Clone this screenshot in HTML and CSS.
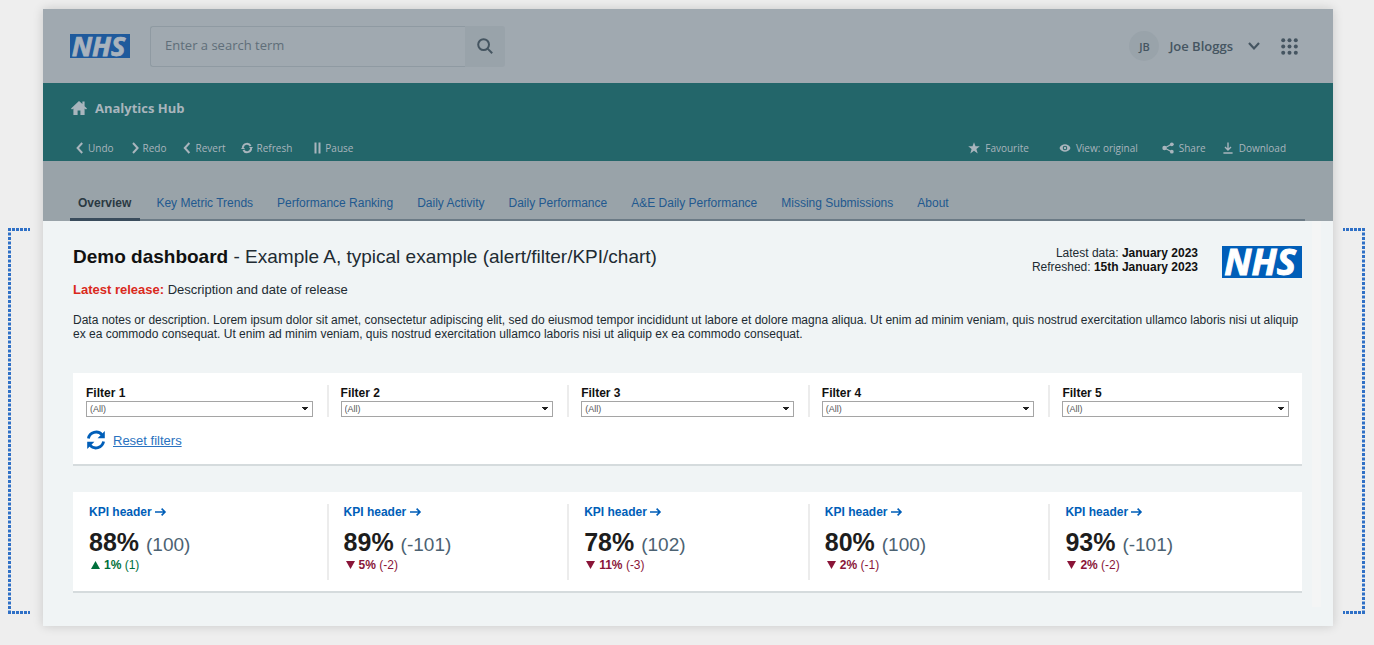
FILE: index.html
```html
<!DOCTYPE html>
<html lang="en">
<head>
<meta charset="utf-8">
<title>Analytics Hub - Demo dashboard</title>
<link rel="stylesheet" href="styles.css">
</head>
<body>
<div class="stage">
  <svg class="bracket" aria-hidden="true">
    <line x1="0" y1="1.5" x2="100%" y2="1.5" stroke-dasharray="3 1"/>
    <line x1="1.5" y1="0" x2="1.5" y2="100%" stroke-dasharray="3 1.5"/>
    <svg y="100%" overflow="visible"><line x1="0" y1="-1.5" x2="100%" y2="-1.5" stroke-dasharray="3 1"/></svg>
  </svg>

  <div class="window">
    <header class="topbar">
      <svg class="logo logo-small" viewBox="0 0 80 32" role="img" aria-label="NHS"><rect width="80" height="32"/><text x="38" y="29" text-anchor="middle">NHS</text></svg>
      <form class="search">
        <input class="search-input" type="search" placeholder="Enter a search term" aria-label="Enter a search term">
        <button class="search-button" type="button" aria-label="Search">
          <svg width="16" height="16" viewBox="0 0 16 16" fill="none" stroke="currentColor" stroke-width="2"><circle cx="6.6" cy="6.6" r="5.4"/><path d="M10.6 10.6L15.2 15.2"/></svg>
        </button>
      </form>
      <div class="user">
        <span class="avatar">JB</span>
        <button class="user-button" type="button">Joe Bloggs
          <svg width="12" height="8" viewBox="0 0 12 8" fill="none" stroke="currentColor" stroke-width="2.2"><path d="M1 1L6 6.4L11 1"/></svg>
        </button>
        <button class="apps" type="button" aria-label="Apps">
          <svg width="17" height="17" viewBox="0 0 17 17" fill="currentColor"><circle cx="2.2" cy="2.2" r="2"/><circle cx="8.5" cy="2.2" r="2"/><circle cx="14.8" cy="2.2" r="2"/><circle cx="2.2" cy="8.5" r="2"/><circle cx="8.5" cy="8.5" r="2"/><circle cx="14.8" cy="8.5" r="2"/><circle cx="2.2" cy="14.8" r="2"/><circle cx="8.5" cy="14.8" r="2"/><circle cx="14.8" cy="14.8" r="2"/></svg>
        </button>
      </div>
    </header>

    <section class="hub">
      <a class="hub-title" href="#">
        <svg width="16" height="14" viewBox="0 0 16 14" fill="currentColor"><path d="M8 0L0 7.4L1 8.6L2.4 7.6V14H6.6V9.4H9.4V14H13.6V7.6L15 8.6L16 7.4L13.6 5.2V.6H11.4V3.1Z"/></svg>
        Analytics Hub
      </a>
      <div class="toolbar">
        <div class="tools">
          <button type="button"><svg width="12" height="12" viewBox="0 0 12 12" class="line"><path d="M8.2 1L3.6 6L8.2 11"/></svg>Undo</button>
          <button type="button"><svg width="12" height="12" viewBox="0 0 12 12" class="line"><path d="M4 1L8.6 6L4 11"/></svg>Redo</button>
          <button type="button"><svg width="12" height="12" viewBox="0 0 12 12" class="line"><path d="M8.4 1L3.8 6L8.4 11"/></svg>Revert</button>
          <button type="button" class="refresh"><svg width="12" height="12" viewBox="0 0 12 12" class="line"><path d="M1.9 5.4A4.1 4.1 0 0 1 9.6 4M10.1 6.6A4.1 4.1 0 0 1 2.4 8"/><path class="solid" d="M8 5H12L10.2 7.6ZM0 7H4L1.8 4.4Z"/></svg>Refresh</button>
          <button type="button" class="apart"><svg width="12" height="12" viewBox="0 0 12 12" class="line"><path d="M4.5 .6V11.4M8.5 .6V11.4"/></svg>Pause</button>
        </div>
        <div class="tools tools-end">
          <button type="button" class="favourite"><svg width="12" height="12" viewBox="0 0 12 12"><path d="M6 .2L7.5 4.3H11.8L8.4 7L9.7 11.4L6 8.8L2.3 11.4L3.6 7L.2 4.3H4.5Z"/></svg>Favourite</button>
          <button type="button"><svg width="12" height="12" viewBox="0 0 12 12"><path fill-rule="evenodd" d="M.5 6C2.4 1 9.6 1 11.5 6C9.6 11 2.4 11 .5 6ZM6 3.7A2.3 2.3 0 1 0 6 8.3A2.3 2.3 0 1 0 6 3.7Z"/><circle cx="6" cy="6" r="1.2"/></svg>View: original</button>
          <button type="button"><svg width="12" height="12" viewBox="0 0 12 12"><path d="M9.6 2.2L2.6 6L9.6 9.8" fill="none" stroke="currentColor" stroke-width="1.2"/><circle cx="2.5" cy="6" r="2.2"/><circle cx="9.8" cy="2.3" r="1.9"/><circle cx="9.8" cy="9.7" r="1.9"/></svg>Share</button>
          <button type="button" class="download"><svg width="12" height="12" viewBox="0 0 12 12" class="line thin"><path d="M6 .6V8M3 5L6 8L9 5M1.4 11H10.6"/></svg>Download</button>
        </div>
      </div>
    </section>

    <nav class="tabs">
      <ul>
        <li><a class="active" href="#" aria-current="page">Overview</a></li>
        <li><a href="#">Key Metric Trends</a></li>
        <li><a href="#">Performance Ranking</a></li>
        <li><a href="#">Daily Activity</a></li>
        <li><a href="#">Daily Performance</a></li>
        <li><a href="#">A&amp;E Daily Performance</a></li>
        <li><a href="#">Missing Submissions</a></li>
        <li><a href="#">About</a></li>
      </ul>
    </nav>

    <div class="body">
      <main class="content">
        <div class="heading">
          <div class="heading-text">
            <h1><strong>Demo dashboard</strong> - Example A, typical example (alert/filter/KPI/chart)</h1>
            <p class="release"><strong>Latest release:</strong> Description and date of release</p>
          </div>
          <p class="dates">Latest data: <strong>January 2023</strong><br>Refreshed: <strong>15th January 2023</strong></p>
          <svg class="logo" viewBox="0 0 80 32" role="img" aria-label="NHS"><rect width="80" height="32"/><text x="38" y="29" text-anchor="middle">NHS</text></svg>
        </div>
        <p class="notes">Data notes or description. Lorem ipsum dolor sit amet, consectetur adipiscing elit, sed do eiusmod tempor incididunt ut labore et dolore magna aliqua. Ut enim ad minim veniam, quis nostrud exercitation ullamco laboris nisi ut aliquip ex ea commodo consequat. Ut enim ad minim veniam, quis nostrud exercitation ullamco laboris nisi ut aliquip ex ea commodo consequat.</p>

        <section class="card">
          <div class="columns filters">
            <div class="column"><label for="f1">Filter 1</label><select id="f1"><option>(All)</option></select></div>
            <div class="column"><label for="f2">Filter 2</label><select id="f2"><option>(All)</option></select></div>
            <div class="column"><label for="f3">Filter 3</label><select id="f3"><option>(All)</option></select></div>
            <div class="column"><label for="f4">Filter 4</label><select id="f4"><option>(All)</option></select></div>
            <div class="column"><label for="f5">Filter 5</label><select id="f5"><option>(All)</option></select></div>
          </div>
          <a class="reset" href="#">
            <svg width="20" height="20" viewBox="0 0 20 20" fill="none" stroke="currentColor" stroke-width="2.8"><path d="M2.4 8.4A7.8 7.8 0 0 1 16 4.8"/><path d="M17.6 11.6A7.8 7.8 0 0 1 4 15.2"/><path class="solid" d="M18.8 1V8.2H11.6ZM1.2 19V11.8H8.4Z"/></svg>
            <span>Reset filters</span>
          </a>
        </section>

        <section class="card">
          <div class="columns kpis">
            <div class="column">
              <h2><a href="#">KPI header <svg class="arrow" viewBox="0 0 12 8"><path d="M0 4H10M6.6 .6L10 4L6.6 7.4"/></svg></a></h2>
              <p class="value"><strong>88%</strong> <span>(100)</span></p>
              <p class="change up"><svg width="9" height="8" viewBox="0 0 9 8"><path d="M4.5 0L9 8H0Z"/></svg><strong>1%</strong> (1)</p>
            </div>
            <div class="column">
              <h2><a href="#">KPI header <svg class="arrow" viewBox="0 0 12 8"><path d="M0 4H10M6.6 .6L10 4L6.6 7.4"/></svg></a></h2>
              <p class="value"><strong>89%</strong> <span>(-101)</span></p>
              <p class="change down"><svg width="9" height="8" viewBox="0 0 9 8"><path d="M4.5 8L9 0H0Z"/></svg><strong>5%</strong> (-2)</p>
            </div>
            <div class="column">
              <h2><a href="#">KPI header <svg class="arrow" viewBox="0 0 12 8"><path d="M0 4H10M6.6 .6L10 4L6.6 7.4"/></svg></a></h2>
              <p class="value"><strong>78%</strong> <span>(102)</span></p>
              <p class="change down"><svg width="9" height="8" viewBox="0 0 9 8"><path d="M4.5 8L9 0H0Z"/></svg><strong>11%</strong> (-3)</p>
            </div>
            <div class="column">
              <h2><a href="#">KPI header <svg class="arrow" viewBox="0 0 12 8"><path d="M0 4H10M6.6 .6L10 4L6.6 7.4"/></svg></a></h2>
              <p class="value"><strong>80%</strong> <span>(100)</span></p>
              <p class="change down"><svg width="9" height="8" viewBox="0 0 9 8"><path d="M4.5 8L9 0H0Z"/></svg><strong>2%</strong> (-1)</p>
            </div>
            <div class="column">
              <h2><a href="#">KPI header <svg class="arrow" viewBox="0 0 12 8"><path d="M0 4H10M6.6 .6L10 4L6.6 7.4"/></svg></a></h2>
              <p class="value"><strong>93%</strong> <span>(-101)</span></p>
              <p class="change down"><svg width="9" height="8" viewBox="0 0 9 8"><path d="M4.5 8L9 0H0Z"/></svg><strong>2%</strong> (-2)</p>
            </div>
          </div>
        </section>
      </main>
      <div class="track"></div>
    </div>
  </div>

  <svg class="bracket bracket-end" aria-hidden="true">
    <line x1="0" y1="1.5" x2="100%" y2="1.5" stroke-dasharray="3 1"/>
    <line x1="1.5" y1="0" x2="1.5" y2="100%" stroke-dasharray="3 1.5"/>
    <svg y="100%" overflow="visible"><line x1="0" y1="-1.5" x2="100%" y2="-1.5" stroke-dasharray="3 1"/></svg>
  </svg>
</div>
</body>
</html>
```
FILE: styles.css
```css
* { box-sizing: border-box; }

body {
  margin: 0;
  background: #eeeeee;
  color: #212b32;
  font-family: "Liberation Sans", Arial, sans-serif;
  font-size: 12px;
}

h1, h2, p, ul { margin: 0; padding: 0; font-weight: normal; }
button { border: 0; padding: 0; background: none; color: inherit; font: inherit; }
a { color: inherit; text-decoration: none; }
svg { display: block; flex: none; }
.solid { fill: currentColor; stroke: none; }

.stage { display: flex; padding: 9px 9px 17px 8px; }

.bracket {
  width: 22px;
  height: auto;
  margin: 219px 13px 12px 0;
  stroke: #2f70c6;
  stroke-width: 3;
  align-self: stretch;
}
.bracket-end { margin: 219px 0 12px 10px; transform: scaleX(-1); }

.window {
  flex: 1;
  min-width: 0;
  background: #f0f4f5;
  box-shadow: 0 0 10px rgba(0, 0, 0, 0.16);
}

.logo { width: 80px; height: 32px; overflow: visible; fill: #005eb8; }
.logo text {
  fill: #ffffff;
  stroke: #ffffff;
  stroke-width: 1px;
  font-family: "Open Sans", "Noto Sans", sans-serif;
  font-size: 36px;
  font-style: italic;
  font-weight: 700;
}
.logo-small { width: 60px; height: 24px; fill: #1f5a9c; }
.logo-small text { fill: #a9b3bd; stroke: #a9b3bd; }

.topbar {
  display: flex;
  align-items: center;
  height: 74px;
  padding: 0 35px 0 27px;
  background: #a0a9b0;
  color: #455561;
  font-family: "Open Sans", "Noto Sans", sans-serif;
}
.search { display: flex; margin-left: 20px; height: 41px; }
.search-input {
  width: 315px;
  padding: 0 14px 3px;
  border: 1px solid #8f9aa2;
  border-right: 0;
  border-radius: 3px 0 0 3px;
  background: #a0a9b0;
  font: 13px "Open Sans", "Noto Sans", sans-serif;
}
.search-input::placeholder { color: #5f6e79; opacity: 1; }
.search-button {
  display: grid;
  place-items: center;
  width: 40px;
  border-radius: 0 3px 3px 0;
  background: #99a3aa;
}
.user { display: flex; align-items: center; margin-left: auto; font-size: 13px; }
.avatar {
  display: grid;
  place-items: center;
  width: 30px;
  height: 30px;
  margin-right: 10px;
  border-radius: 50%;
  background: #99a3aa;
  font-size: 11px;
  font-weight: 600;
}
.user-button { display: flex; align-items: center; gap: 15px; margin-right: 21px; font-weight: 600; }

.hub { padding: 16px 47px 5px 28px; background: #23666a; color: #a9b5bd; font-family: "Open Sans", "Noto Sans", sans-serif; }
.hub-title { display: flex; align-items: center; gap: 8px; font-size: 13px; font-weight: 700; line-height: 18px; }
.toolbar { display: flex; justify-content: space-between; margin-top: 23px; padding-left: 3px; line-height: 16px; font-size: 10px; }
.tools { display: flex; gap: 15px; }
.tools button { display: flex; align-items: center; gap: 2px; }
.tools .refresh { gap: 4px; }
.tools .apart { margin-left: 4px; }
.tools svg { fill: currentColor; }
.tools .line { fill: none; stroke: currentColor; stroke-width: 2; }
.tools .thin { stroke-width: 1.4; }
.tools-end { gap: 24px; }
.tools-end button { gap: 5px; }
.tools-end .favourite { margin-right: 6px; }
.tools-end .download { margin-left: -8px; }

.tabs { padding: 27px 28px 0 27px; background: #99a3a9; }
.tabs ul { display: flex; gap: 8px; border-bottom: 2px solid #6b7a85; list-style: none; }
.tabs a { display: block; padding: 8px 8px 9px; line-height: 14px; color: #22598f; }
.tabs .active { position: relative; padding-right: 9px; color: #2b3942; font-weight: 700; }
.tabs .active::after { content: ""; position: absolute; right: 0; bottom: -2px; left: 0; height: 3px; background: #3a4c5c; }

.body { display: flex; gap: 10px; padding: 0 12px 0 30px; }
.content { flex: 1; min-width: 0; padding: 25px 0 33px; }
.track { width: 9px; margin-bottom: 19px; background: #f4f5f5; }

.heading { display: flex; align-items: flex-start; }
.heading-text { flex: 1; }
.heading h1 { font-size: 19px; line-height: 22px; }
.release { margin-top: 14px; font-size: 13px; line-height: 16px; }
.release strong { color: #da291c; }
.dates { margin-right: 24px; line-height: 14px; text-align: right; }
.dates strong, .heading h1 strong { color: #111111; }
.notes { margin-top: 15px; line-height: 14px; }

.card { margin-top: 32px; padding: 12px 13px 11px; border-bottom: 2px solid #d5dbdd; background: #ffffff; }
.card + .card { margin-top: 26px; }
.columns { display: grid; grid-template-columns: repeat(5, minmax(0, 1fr)); }
.column { padding: 0 14px 0 12px; border-left: 2px solid #ececec; }
.column:first-child { padding-left: 0; border-left: 0; }
.column:last-child { padding-right: 0; }

.filters label { display: block; color: #111111; font-weight: 700; line-height: 16px; }
.filters select {
  display: block;
  width: 100%;
  height: 16px;
  padding: 0 3px;
  border: 1px solid #a5a5a5;
  border-radius: 0;
  appearance: none;
  background-color: #ffffff;
  background-image: linear-gradient(to bottom left, #222222 50%, transparent 50%), linear-gradient(to bottom right, #222222 50%, transparent 50%);
  background-position: right 7px center, right 4px center;
  background-repeat: no-repeat;
  background-size: 3px 4px;
  color: #555555;
  font: 9px "Liberation Sans", Arial, sans-serif;
}
.filters + .reset { margin: 13px 0 -1px; }
.reset { display: inline-flex; align-items: center; gap: 7px; color: #005eb8; font-size: 13px; }
.reset span { color: #2a72c0; text-decoration: underline; }

.kpis .column { padding-left: 15px; padding-bottom: 8px; }
.kpis .column:first-child { padding-left: 3px; }
.kpis h2 { color: #005eb8; font-size: 12px; font-weight: 700; line-height: 17px; }
.kpis .arrow { display: inline-block; width: 12px; height: 8px; fill: none; stroke: currentColor; stroke-width: 1.6; }
.value { margin-top: 8px; color: #1d1d1d; font-size: 25px; line-height: 27px; }
.value span { color: #4c6272; font-size: 19px; }
.change { display: flex; align-items: center; line-height: 14px; white-space: pre; }
.change svg { margin: 0 4px 0 2px; fill: currentColor; }
.up { color: #00703c; }
.down { color: #8a1538; }
```
